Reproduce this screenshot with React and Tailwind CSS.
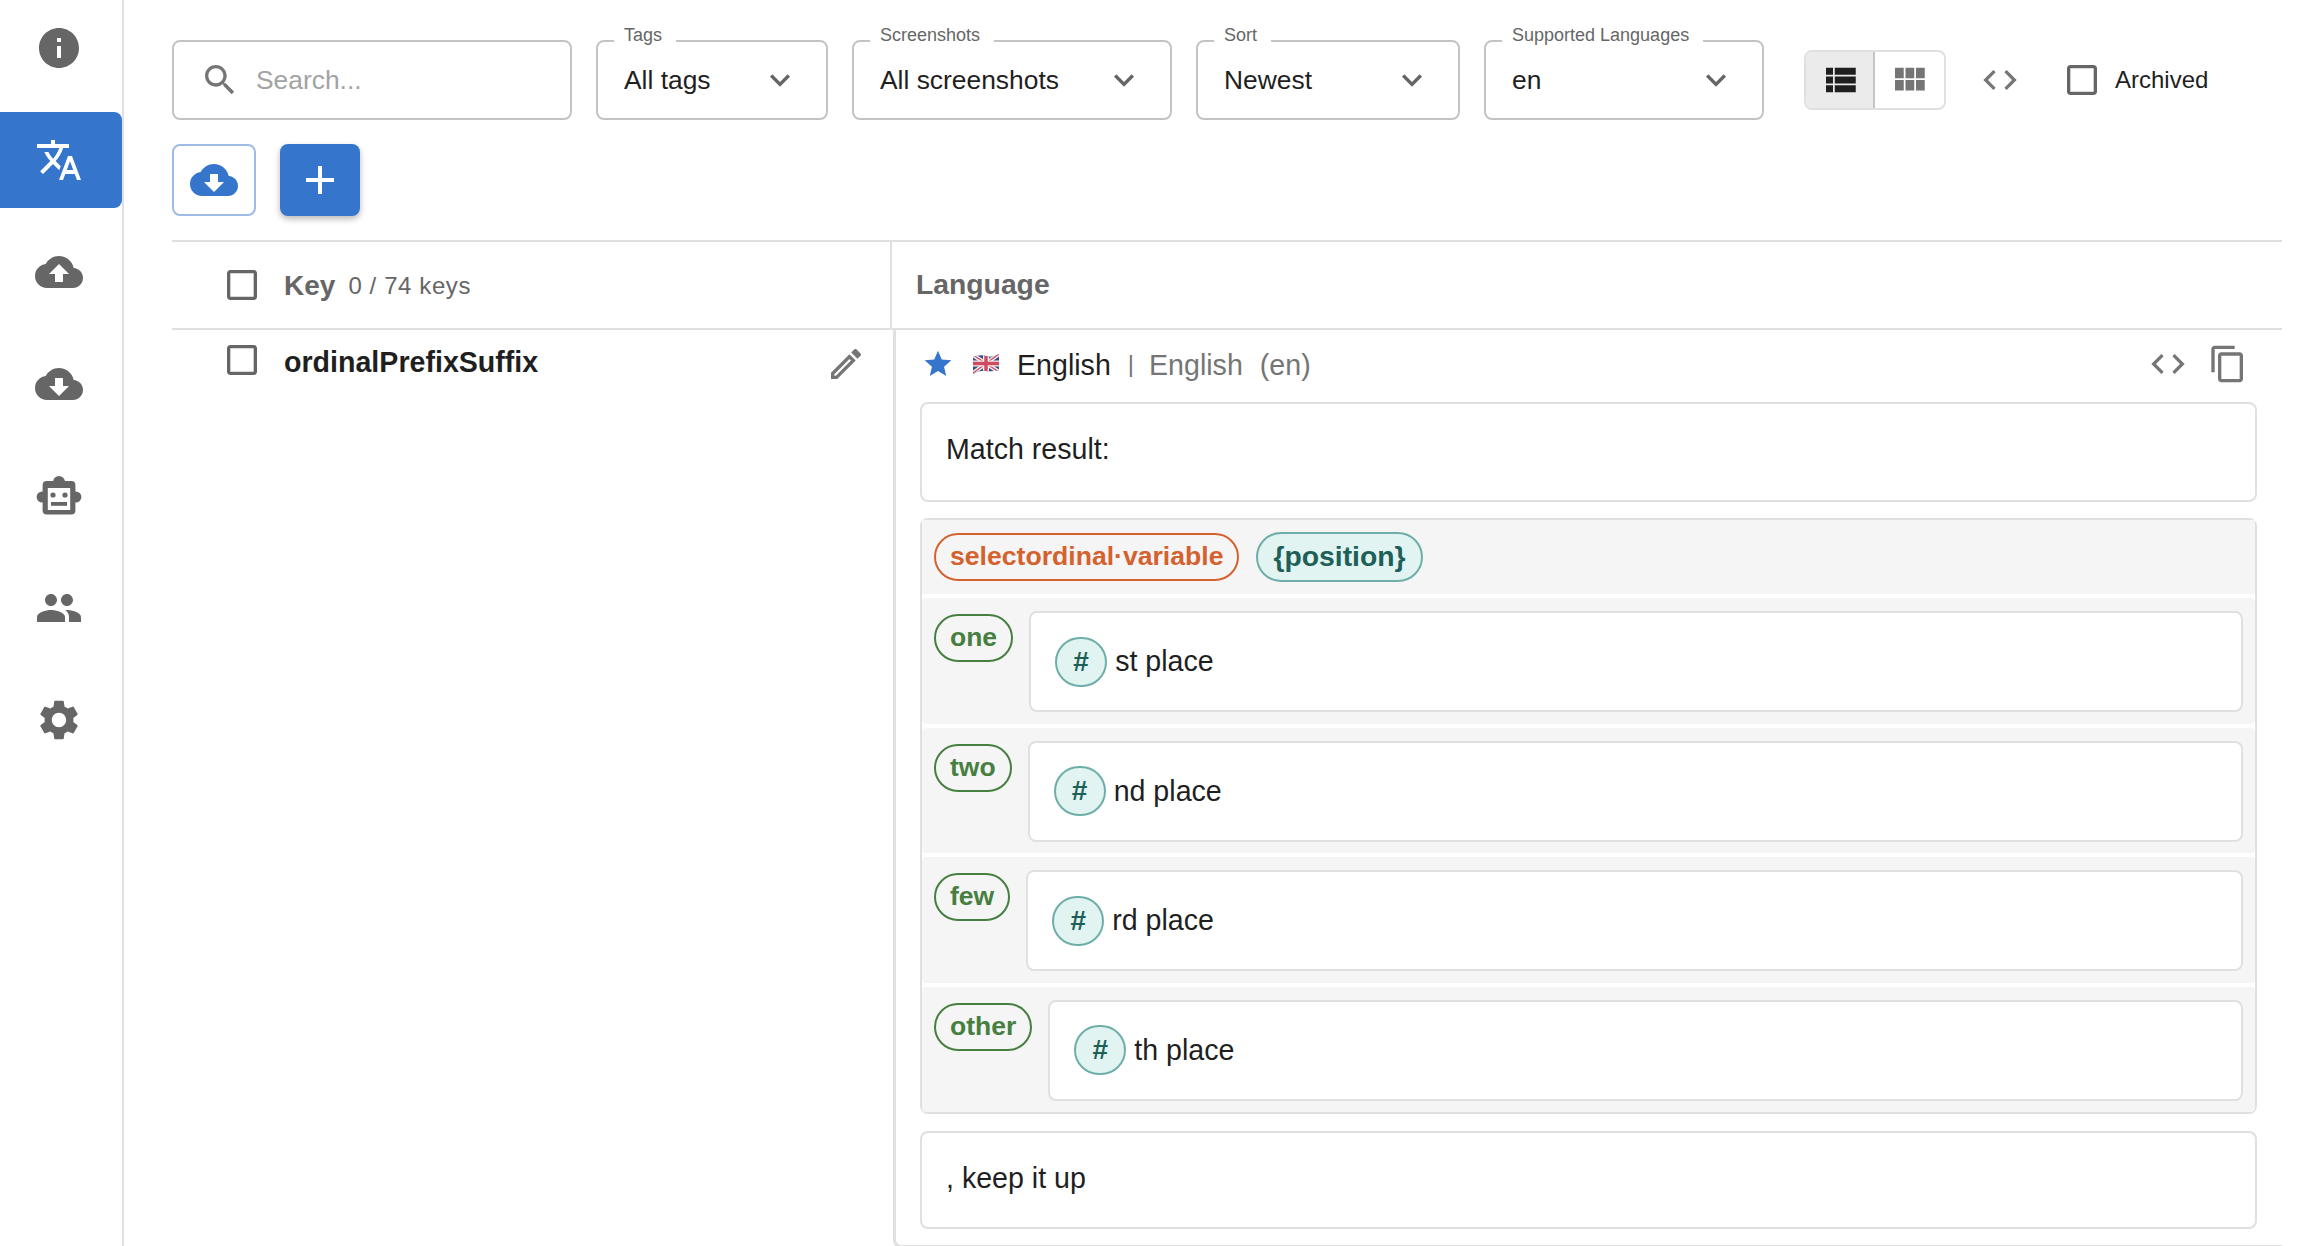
import React from 'react';

const paths = {
  info: 'M12 2C6.48 2 2 6.48 2 12s4.48 10 10 10 10-4.48 10-10S17.52 2 12 2zm1 15h-2v-6h2v6zm0-8h-2V7h2v2z',
  translate: 'M12.87 15.07l-2.54-2.51.03-.03c1.74-1.94 2.98-4.17 3.71-6.53H17V4h-7V2H8v2H1v1.99h11.17C11.5 7.92 10.44 9.75 9 11.35 8.07 10.32 7.3 9.19 6.69 8h-2c.73 1.63 1.73 3.17 2.98 4.56l-5.09 5.02L4 19l5-5 3.11 3.11.76-2.04zM18.5 10h-2L12 22h2l1.12-3h4.75L21 22h2l-4.5-12zm-2.62 7l1.62-4.33L19.12 17h-3.24z',
  upload: 'M19.35 10.04C18.67 6.59 15.64 4 12 4 9.11 4 6.6 5.64 5.35 8.04 2.34 8.36 0 10.91 0 14c0 3.31 2.69 6 6 6h13c2.76 0 5-2.24 5-5 0-2.64-2.05-4.78-4.65-4.96zM14 13v4h-4v-4H7l5-5 5 5h-3z',
  download: 'M19.35 10.04C18.67 6.59 15.64 4 12 4 9.11 4 6.6 5.64 5.35 8.04 2.34 8.36 0 10.91 0 14c0 3.31 2.69 6 6 6h13c2.76 0 5-2.24 5-5 0-2.64-2.05-4.78-4.65-4.96zM17 13l-5 5-5-5h3V9h4v4h3z',
  people: 'M16 11c1.66 0 2.99-1.34 2.99-3S17.66 5 16 5c-1.66 0-3 1.34-3 3s1.34 3 3 3zm-8 0c1.66 0 2.99-1.34 2.99-3S9.66 5 8 5C6.34 5 5 6.34 5 8s1.34 3 3 3zm0 2c-2.33 0-7 1.17-7 3.5V19h14v-2.5c0-2.33-4.67-3.5-7-3.5zm8 0c-.29 0-.62.02-.97.05 1.16.84 1.97 1.97 1.97 3.45V19h6v-2.5c0-2.33-4.67-3.5-7-3.5z',
  settings: 'M19.14 12.94c.04-.3.06-.61.06-.94 0-.32-.02-.64-.07-.94l2.03-1.58c.18-.14.23-.41.12-.61l-1.92-3.32c-.12-.22-.37-.29-.59-.22l-2.39.96c-.5-.38-1.03-.7-1.62-.94l-.36-2.54c-.04-.24-.24-.41-.48-.41h-3.84c-.24 0-.43.17-.47.41l-.36 2.54c-.59.24-1.13.57-1.62.94l-2.39-.96c-.22-.08-.47 0-.59.22L2.74 8.87c-.12.21-.08.47.12.61l2.03 1.58c-.05.3-.09.63-.09.94s.02.64.07.94l-2.03 1.58c-.18.14-.23.41-.12.61l1.92 3.32c.12.22.37.29.59.22l2.39-.96c.5.38 1.03.7 1.62.94l.36 2.54c.05.24.24.41.48.41h3.84c.24 0 .44-.17.47-.41l.36-2.54c.59-.24 1.13-.56 1.62-.94l2.39.96c.22.08.47 0 .59-.22l1.92-3.32c.12-.22.07-.47-.12-.61l-2.01-1.58zM12 15.6c-1.98 0-3.6-1.62-3.6-3.6s1.62-3.6 3.6-3.6 3.6 1.62 3.6 3.6-1.62 3.6-3.6 3.6z',
  search: 'M15.5 14h-.79l-.28-.27C15.41 12.59 16 11.11 16 9.5 16 5.91 13.09 3 9.5 3S3 5.91 3 9.5 5.91 16 9.5 16c1.61 0 3.09-.59 4.23-1.57l.27.28v.79l5 4.99L20.49 19l-4.99-5zm-6 0C7.01 14 5 11.99 5 9.5S7.01 5 9.5 5 14 7.01 14 9.5 11.99 14 9.5 14z',
  chevron: 'M16.59 8.59L12 13.17 7.41 8.59 6 10l6 6 6-6z',
  list: 'M4 14h4v-4H4v4zm0 5h4v-4H4v4zm0-10h4V5H4v4zm5 5h12v-4H9v4zm0 5h12v-4H9v4zM9 5v4h12V5H9z',
  grid: 'M4 11h5V5H4v6zm0 7h5v-6H4v6zm6 0h5v-6h-5v6zm6 0h5v-6h-5v6zm-6-7h5V5h-5v6zm6-6v6h5V5h-5z',
  code: 'M9.4 16.6L4.8 12l4.6-4.6L8 6l-6 6 6 6 1.4-1.4zm5.2 0l4.6-4.6-4.6-4.6L16 6l6 6-6 6-1.4-1.4z',
  copy: 'M16 1H4c-1.1 0-2 .9-2 2v14h2V3h12V1zm3 4H8c-1.1 0-2 .9-2 2v14c0 1.1.9 2 2 2h11c1.1 0 2-.9 2-2V7c0-1.1-.9-2-2-2zm0 16H8V7h11v14z',
  checkbox: 'M19 5v14H5V5h14m0-2H5c-1.1 0-2 .9-2 2v14c0 1.1.9 2 2 2h14c1.1 0 2-.9 2-2V5c0-1.1-.9-2-2-2z',
  star: 'M12 17.27 18.18 21l-1.64-7.03L22 9.24l-7.19-.61L12 2 9.19 8.63 2 9.24l5.46 4.73L5.82 21z',
  edit: 'M3 17.25V21h3.75L17.81 9.94l-3.75-3.75L3 17.25zM5.92 19H5v-.92l9.06-9.06.92.92L5.92 19zM20.71 5.63l-2.34-2.34c-.2-.2-.45-.29-.71-.29s-.51.1-.7.29l-1.83 1.83 3.75 3.75 1.83-1.83c.39-.39.39-1.02 0-1.41z',
  add: 'M19 13h-6v6h-2v-6H5v-2h6V5h2v6h6v2z',
};

const Icon = ({ name, className }) => (
  <svg viewBox="0 0 24 24" fill="currentColor" className={`shrink-0 ${className}`}>
    <path d={paths[name]} />
  </svg>
);

const RobotIcon = () => (
  <svg viewBox="0 0 24 24" className="w-12 h-12 shrink-0 text-[#666666]" fill="currentColor">
    <circle cx="12" cy="5" r="3" />
    <circle cx="3.6" cy="12.5" r="2.8" />
    <circle cx="20.4" cy="12.5" r="2.8" />
    <rect x="3.8" y="4.5" width="16.4" height="16.8" rx="2" />
    <rect x="6.4" y="8" width="11.2" height="11" fill="#ffffff" />
    <circle cx="9" cy="11.5" r="1.3" />
    <circle cx="15" cy="11.5" r="1.3" />
    <rect x="8" y="15" width="8" height="1.9" />
  </svg>
);

const UkFlag = () => (
  <svg viewBox="0 0 26 20" className="w-[26px] h-[20px] shrink-0">
    <defs>
      <clipPath id="wave">
        <path d="M0 3 Q7 0 13 2 T26 0 V16 Q20 18 13 17 T0 20 Z" />
      </clipPath>
    </defs>
    <g clipPath="url(#wave)">
      <rect width="26" height="20" fill="#3b4a86" />
      <path d="M0 1 L26 18 M26 0 L0 19" stroke="#f3eef0" strokeWidth="4" />
      <path d="M0 1 L26 18 M26 0 L0 19" stroke="#cf4a5e" strokeWidth="1.4" />
      <path d="M13 0 V20 M0 9.5 H26" stroke="#f3eef0" strokeWidth="6" />
      <path d="M13 0 V20 M0 9.5 H26" stroke="#cf4a5e" strokeWidth="3.4" />
    </g>
  </svg>
);

const sideItems = [
  { name: 'info' },
  { name: 'translate', active: true },
  { name: 'upload' },
  { name: 'download' },
  { name: 'robot' },
  { name: 'people' },
  { name: 'settings' },
];

const Sidebar = () => (
  <aside className="w-[124px] shrink-0 border-r-2 border-[#e0e0e0] flex flex-col gap-4">
    {sideItems.map((item) => (
      <div
        key={item.name}
        className={`h-24 w-[122px] pl-[35px] flex items-center rounded-r-lg ${item.active ? 'bg-[#3575cc]' : ''}`}
      >
        {item.name === 'robot' ? (
          <RobotIcon />
        ) : (
          <Icon name={item.name} className={`w-12 h-12 ${item.active ? 'text-white' : 'text-[#666666]'}`} />
        )}
      </div>
    ))}
  </aside>
);

const Select = ({ label, value, width }) => (
  <div className={`relative h-20 ${width} shrink-0 rounded-lg border-2 border-[#c4c4c4] pl-[26px] pr-[26px] flex items-center justify-between`}>
    <span className="absolute left-4 -top-[17px] bg-white pl-2.5 pr-3.5 text-[18px] leading-5 text-[#666666]">{label}</span>
    <span className="mt-[2px] text-[26.4px] text-[#1f1f1f]">{value}</span>
    <Icon name="chevron" className="w-10 h-10 text-[#666666]" />
  </div>
);

const Toolbar = () => (
  <div className="flex items-center">
    <div className="h-20 w-[400px] shrink-0 rounded-lg border-2 border-[#c4c4c4] pl-[26px] flex items-center gap-4">
      <Icon name="search" className="w-10 h-10 text-[#757575]" />
      <span className="mt-[2px] text-[26.4px] text-[#a3a3a3]">Search...</span>
    </div>
    <div className="ml-6 flex gap-6">
      <Select label="Tags" value="All tags" width="w-[232px]" />
      <Select label="Screenshots" value="All screenshots" width="w-[320px]" />
      <Select label="Sort" value="Newest" width="w-[264px]" />
      <Select label="Supported Languages" value="en" width="w-[280px]" />
    </div>
    <div className="ml-10 h-[60px] w-[142px] shrink-0 flex rounded-lg border-2 border-[#e0e0e0] overflow-hidden">
      <div className="w-[69px] bg-[#ebebeb] border-r-2 border-[#c4c4c4] flex items-center justify-center">
        <Icon name="list" className="w-[42px] h-[42px] text-[#1f1f1f]" />
      </div>
      <div className="flex-1 pr-[2px] flex items-center justify-center">
        <Icon name="grid" className="w-[42px] h-[42px] text-[#757575]" />
      </div>
    </div>
    <Icon name="code" className="ml-[34px] w-10 h-10 text-[#757575]" />
    <Icon name="checkbox" className="ml-[42px] w-10 h-10 text-[#666666]" />
    <span className="ml-[13px] text-2xl text-[#1f1f1f]">Archived</span>
  </div>
);

const Box = ({ children, className }) => (
  <div className={`rounded-lg border-2 border-[#e0e0e0] bg-white flex items-center ${className}`}>{children}</div>
);

const forms = [
  { name: 'one', text: 'st place' },
  { name: 'two', text: 'nd place' },
  { name: 'few', text: 'rd place' },
  { name: 'other', text: 'th place' },
];

const FormRow = ({ name, text }) => (
  <div className="h-[125.5px] bg-[#f5f5f5] rounded-sm pl-3 pr-3 pt-[13px] flex items-start gap-4">
    <span className="mt-[3px] h-12 px-3.5 rounded-full border-2 border-[#467f3f] text-[26.5px] leading-[43px] font-bold text-[#467f3f]">
      {name}
    </span>
    <Box className="flex-1 h-[101px] pl-6">
      <span className="w-[52px] h-[50px] rounded-full border-2 border-[#6eaea8] bg-[#e1f4f1] flex items-center justify-center text-[28px] font-bold text-[#1d6058]">
        #
      </span>
      <span className="ml-2 text-[28.6px] text-[#1f1f1f]">{text}</span>
    </Box>
  </div>
);

const Translation = () => (
  <div className="flex-1 min-w-0 border-l-[3px] border-b-[3px] border-[#e0e0e0] rounded-bl-lg pl-6 pr-[25px] pb-4">
    <div className="h-[68px] flex items-center">
      <Icon name="star" className="ml-[2px] w-8 h-8 text-[#3575cc]" />
      <span className="ml-[19px]"><UkFlag /></span>
      <span className="ml-[18px] mt-[2px] text-[28.6px] text-[#1f1f1f]">English</span>
      <span className="ml-[17px] text-[24px] text-[#757575]">|</span>
      <span className="ml-[15px] mt-[2px] text-[28.6px] text-[#757575]">English</span>
      <span className="ml-[17px] mt-[2px] text-[28.6px] text-[#757575]">(en)</span>
      <Icon name="code" className="ml-auto w-10 h-10 text-[#757575]" />
      <Icon name="copy" className="ml-5 mr-[9px] w-10 h-10 text-[#757575]" />
    </div>
    <Box className="mt-1 h-[100px] pl-6 pb-[6px] text-[28.6px] text-[#1f1f1f]">Match result:</Box>
    <div className="mt-4 rounded-lg border-2 border-[#e0e0e0] bg-white flex flex-col gap-1">
      <div className="h-[74px] bg-[#f5f5f5] pl-3 flex items-center gap-[17px]">
        <span className="h-12 px-3.5 rounded-full border-2 border-[#d4622e] text-[26.6px] leading-[43px] font-bold text-[#d4622e]">
          selectordinal·variable
        </span>
        <span className="h-[50px] px-[15px] rounded-full border-2 border-[#6eaea8] bg-[#e1f4f1] text-[28.3px] leading-[45px] font-bold text-[#1d6058]">
          {'{position}'}
        </span>
      </div>
      {forms.map((f) => (
        <FormRow key={f.name} {...f} />
      ))}
    </div>
    <Box className="mt-[17px] h-[98px] pl-6 pb-[3px] text-[28.6px] text-[#1f1f1f]">, keep it up</Box>
  </div>
);

const Table = () => (
  <div className="mt-6 mr-[26px] border-t-2 border-[#e0e0e0]">
    <div className="h-[88px] flex items-center border-b-2 border-[#e0e0e0]">
      <div className="w-[720px] h-full shrink-0 border-r-2 border-[#e0e0e0] pl-[50px] flex items-center">
        <Icon name="checkbox" className="w-10 h-10 text-[#666666]" />
        <span className="ml-[22px] mt-[2px] text-[28px] font-bold text-[#666666]">Key</span>
        <span className="ml-[13px] mt-[2px] text-2xl tracking-[0.6px] text-[#666666]">0 / 74 keys</span>
      </div>
      <span className="ml-6 mb-[2px] text-[28.3px] font-bold text-[#666666]">Language</span>
    </div>
    <div className="flex">
      <div className="w-[721px] shrink-0 pl-[50px] pr-[27px] pt-2.5 flex items-start">
        <Icon name="checkbox" className="w-10 h-10 text-[#666666]" />
        <span className="ml-[22px] mt-[2px] text-[28.6px] leading-10 font-bold text-[#1f1f1f]">ordinalPrefixSuffix</span>
        <Icon name="edit" className="ml-auto mt-1 w-10 h-10 text-[#757575]" />
      </div>
      <Translation />
    </div>
  </div>
);

const App = () => (
  <div className="h-screen flex overflow-hidden bg-white font-['Liberation_Sans',Arial,sans-serif]">
    <Sidebar />
    <main className="flex-1 min-w-0 pl-12 pt-10">
      <Toolbar />
      <div className="mt-6 flex gap-6">
        <div className="w-[84px] h-[72px] rounded-lg border-2 border-[#9dbde6] flex items-center justify-center">
          <Icon name="download" className="w-12 h-12 text-[#3575cc]" />
        </div>
        <div className="w-20 h-[72px] rounded-lg bg-[#3575cc] shadow-[0_3px_6px_rgba(0,0,0,0.28)] flex items-center justify-center">
          <Icon name="add" className="w-12 h-12 text-white" />
        </div>
      </div>
      <Table />
    </main>
  </div>
);

export default App;
